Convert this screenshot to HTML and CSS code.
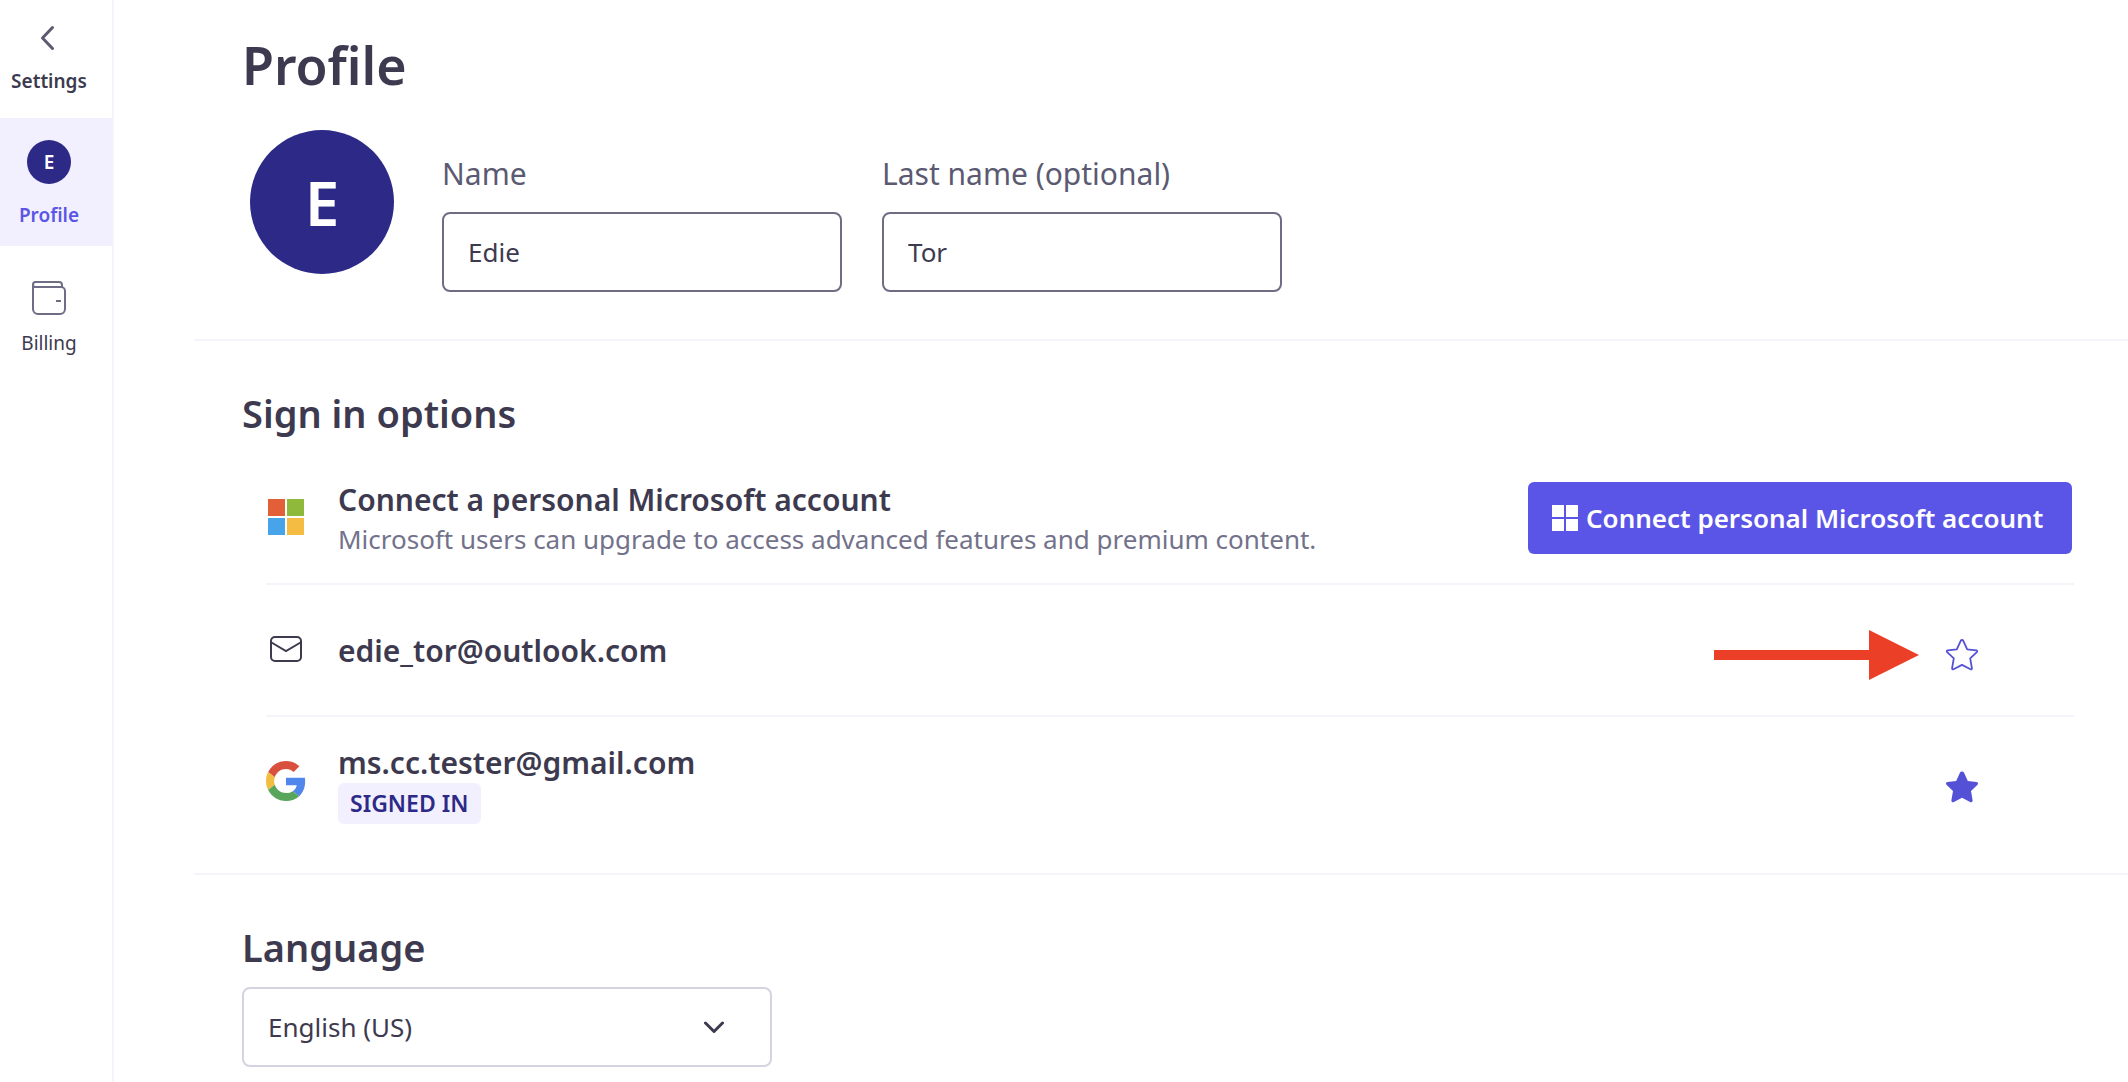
FILE: index.html
```
<!DOCTYPE html>
<html lang="en">
<head>
    <meta charset="UTF-8">
    <meta name="viewport" content="width=device-width, initial-scale=1.0">
    <title>Profile</title>
    <link rel="stylesheet" href="styles.css">
</head>
<body>
    <div class="app">
        <nav class="sidebar">
            <a class="nav-back" href="#">
                <svg width="24" height="28" viewBox="0 0 24 28"><path d="M15.500 3.500L5.500 14l10 10.500" fill="none" stroke="#5b5a72" stroke-width="3" stroke-linecap="round" stroke-linejoin="round"/></svg>
                <span>Settings</span>
            </a>
            <a class="nav-item active" href="#">
                <span class="avatar avatar-small">E</span>
                <span>Profile</span>
            </a>
            <a class="nav-item" href="#">
                <svg width="44" height="44" viewBox="0 0 44 44" fill="none" stroke="#6e6d85" stroke-width="2">
                    <path d="M6 8.500V33a5 5 0 0 0 5 5h22a5 5 0 0 0 5-5V15a4 4 0 0 0-4-4H8.500a2.500 2.500 0 0 1 0-5H32a3 3 0 0 1 3 3v2"/>
                    <path d="M29 25h5"/>
                </svg>
                <span>Billing</span>
            </a>
        </nav>

        <main class="content">
            <section class="section profile">
                <h1>Profile</h1>
                <form class="profile-row">
                    <div class="avatar avatar-large">E</div>
                    <div class="field">
                        <label for="first_name">Name</label>
                        <input type="text" id="first_name" name="first_name" value="Edie">
                    </div>
                    <div class="field">
                        <label for="last_name">Last name (optional)</label>
                        <input type="text" id="last_name" name="last_name" value="Tor">
                    </div>
                </form>
            </section>

            <section class="section signin">
                <h2>Sign in options</h2>
                <ul class="accounts">
                    <li class="account">
                        <div class="account-icon">
                            <svg width="36" height="36" viewBox="0 0 36 36">
                                <path fill="#e25f38" d="M0 0h17v17H0z"/>
                                <path fill="#8eb93a" d="M19 0h17v17H19z"/>
                                <path fill="#47a4ea" d="M0 19h17v17H0z"/>
                                <path fill="#f4bc42" d="M19 19h17v17H19z"/>
                            </svg>
                        </div>
                        <div class="account-info">
                            <strong>Connect a personal Microsoft account</strong>
                            <p>Microsoft users can upgrade to access advanced features and premium content.</p>
                        </div>
                        <button type="button" class="connect">
                            <svg width="26" height="26" viewBox="0 0 26 26" fill="#fff"><path d="M0 0h12v12H0zM14 0h12v12H14zM0 14h12v12H0zM14 14h12v12H14z"/></svg>
                            <span>Connect personal Microsoft account</span>
                        </button>
                    </li>
                    <li class="account">
                        <div class="account-icon">
                            <svg width="32" height="26" viewBox="0 0 32 26" fill="none" stroke="#3d3a4f" stroke-width="2">
                                <rect x="1" y="1" width="30" height="24" rx="4"/>
                                <path d="M1.500 6.500L16 15l14.500-8.500"/>
                            </svg>
                        </div>
                        <div class="account-info">
                            <strong>edie_tor@outlook.com</strong>
                        </div>
                        <div class="account-action">
                            <svg width="205" height="50" viewBox="0 0 205 50"><path fill="#eb4027" d="M0 20h155V0l50 25-50 25V30H0z"/></svg>
                            <button type="button" class="star" aria-label="Make primary">
                                <svg width="32" height="32" viewBox="0 0 32 32"><path fill="none" stroke="#5551d6" stroke-width="1.800" stroke-linejoin="round" d="M14.700 1.800a1.450 1.450 0 0 1 2.600 0L21.200 10.400l9 1c1 .1 1.300 1 .6 1.700L24.200 19.300l1.700 9.900c.1.900-.6 1.400-1.400 1L16 25.900l-8.500 4.300c-.8.400-1.500-.1-1.400-1l1.700-9.900L1.200 13.100c-.7-.7-.4-1.600.6-1.700l9-1z"/></svg>
                            </button>
                        </div>
                    </li>
                    <li class="account">
                        <div class="account-icon">
                            <svg width="40" height="40" viewBox="0 0 48 48">
                                <path fill="#d9503f" d="M24 9.500c3.540 0 6.710 1.220 9.210 3.600l6.850-6.850C35.900 2.380 30.470 0 24 0 14.620 0 6.510 5.380 2.560 13.220l7.980 6.190C12.430 13.720 17.740 9.500 24 9.500z"/>
                                <path fill="#5186ec" d="M46.980 24.550c0-1.570-.15-3.090-.38-4.550H24v9.020h12.940c-.58 2.960-2.260 5.480-4.780 7.180l7.730 6c4.510-4.180 7.090-10.360 7.090-17.650z"/>
                                <path fill="#f1be42" d="M10.530 28.590c-.48-1.450-.76-2.990-.76-4.590s.27-3.140.76-4.590l-7.980-6.190C.92 16.460 0 20.120 0 24c0 3.880.92 7.540 2.560 10.780l7.970-6.190z"/>
                                <path fill="#58a55c" d="M24 48c6.480 0 11.930-2.130 15.890-5.810l-7.730-6c-2.150 1.450-4.920 2.300-8.160 2.300-6.260 0-11.570-4.220-13.470-9.910l-7.980 6.190C6.510 42.620 14.620 48 24 48z"/>
                            </svg>
                        </div>
                        <div class="account-info">
                            <strong>ms.cc.tester@gmail.com</strong>
                            <span class="badge">SIGNED IN</span>
                        </div>
                        <div class="account-action">
                            <button type="button" class="star" aria-label="Primary account">
                                <svg width="32" height="32" viewBox="0 0 32 32"><path fill="#5551d6" d="M13.800 2a2.400 2.400 0 0 1 4.400 0l3.600 8 8.700 1c1.600.2 2 2 .8 3L25 20l1.600 9.200c.2 1.700-1.100 2.600-2.500 1.900L16 26.800l-8.100 4.300c-1.400.7-2.700-.2-2.500-1.900L7 20 .7 14c-1.200-1-.8-2.800.8-3l8.700-1z"/></svg>
                            </button>
                        </div>
                    </li>
                </ul>
            </section>

            <section class="section language">
                <h2><label for="language">Language</label></h2>
                <div class="select">
                    <select id="language" name="language">
                        <option>English (US)</option>
                    </select>
                    <svg width="20" height="12" viewBox="0 0 20 12"><path d="M1.500 2L10 10.500 18.500 2" fill="none" stroke="#3d3a4f" stroke-width="3" stroke-linecap="round" stroke-linejoin="round"/></svg>
                </div>
            </section>
        </main>
    </div>
</body>
</html>
```
FILE: styles.css
```
* { box-sizing: border-box; }
body { margin: 0; font-family: "Noto Sans", "Open Sans", sans-serif; color: #3d3a4f; background: #fff; }
h1, h2, p, ul { margin: 0; padding: 0; }
h1 { font-size: 52px; line-height: 74px; font-weight: 600; }
h2 { font-size: 38px; line-height: 56px; font-weight: 600; margin-bottom: 12px; }
svg { display: block; flex: none; }
button { font-family: inherit; border: none; cursor: pointer; }

.app { display: flex; min-height: 100vh; }

/* Sidebar */
.sidebar { flex: none; width: 114px; border-right: 2px solid #f5f4fb; }
.sidebar a { display: flex; flex-direction: column; align-items: center; padding-right: 14px; font-size: 19px; line-height: 28px; color: #3d3a4f; text-decoration: none; }
.nav-back { height: 118px; padding-top: 24px; gap: 15px; font-weight: 600; }
.nav-item { height: 128px; padding-top: 22px; gap: 17px; }
.nav-item:last-child { padding-top: 30px; gap: 9px; }
.sidebar .active { background: #f2f0fe; color: #5b55e7; font-weight: 600; }

.avatar { display: flex; align-items: center; justify-content: center; flex: none; border-radius: 50%; background: #2d2a87; color: #fff; font-weight: 600; }
.avatar-small { width: 44px; height: 44px; font-size: 19px; }
.avatar-large { width: 144px; height: 144px; margin-left: 8px; font-size: 62px; }

/* Content */
.content { flex: 1; margin-left: 80px; }
.section { padding: 44px 54px 26px 48px; border-bottom: 2px solid #f5f4fb; }
.profile { padding-top: 28px; padding-bottom: 47px; }
.language { border-bottom: none; padding-bottom: 0; }

.profile-row { display: flex; padding-top: 28px; }
.field { display: flex; flex-direction: column; gap: 16px; width: 400px; padding-top: 22px; margin-left: 40px; }
.avatar + .field { margin-left: 48px; }
.field label { font-size: 30px; line-height: 44px; color: #5b5a72; }
.field input { height: 80px; padding: 0 24px; border: 2px solid #6e6d85; border-radius: 8px; font-family: inherit; font-size: 26px; color: #3d3a4f; }

.accounts { margin-left: 24px; list-style: none; }
.account { display: flex; align-items: center; gap: 32px; height: 132px; border-bottom: 2px solid #f5f4fb; }
.account:last-child { height: 130px; border-bottom: none; }
.account-icon { display: flex; justify-content: center; flex: none; width: 40px; padding-bottom: 3px; }
.account-info { flex: 1; padding-top: 2px; }
.account-info strong { display: block; font-size: 30px; line-height: 40px; font-weight: 600; }
.account-info p { font-size: 26px; line-height: 38px; color: #73728b; }
.account-action { display: flex; align-items: center; gap: 27px; padding: 10px 96px 0 0; }
.badge { display: block; width: fit-content; padding: 0 12px; border-radius: 6px; background: #f2f0fe; color: #2d2a87; font-size: 23px; line-height: 41px; font-weight: 600; }
.star { padding: 0; background: none; }
.connect { display: flex; align-items: center; gap: 8px; min-width: 544px; height: 72px; margin-right: 2px; padding: 0 24px; border-radius: 6px; background: #5b55e7; color: #fff; font-size: 26px; font-weight: 600; }

.select { display: flex; align-items: center; position: relative; width: 530px; }
.select select { appearance: none; width: 100%; height: 80px; padding: 0 24px; border: 2px solid #d5d3e2; border-radius: 8px; background: #fff; font-family: inherit; font-size: 26px; color: #3d3a4f; }
.select svg { position: absolute; right: 48px; pointer-events: none; }
```
